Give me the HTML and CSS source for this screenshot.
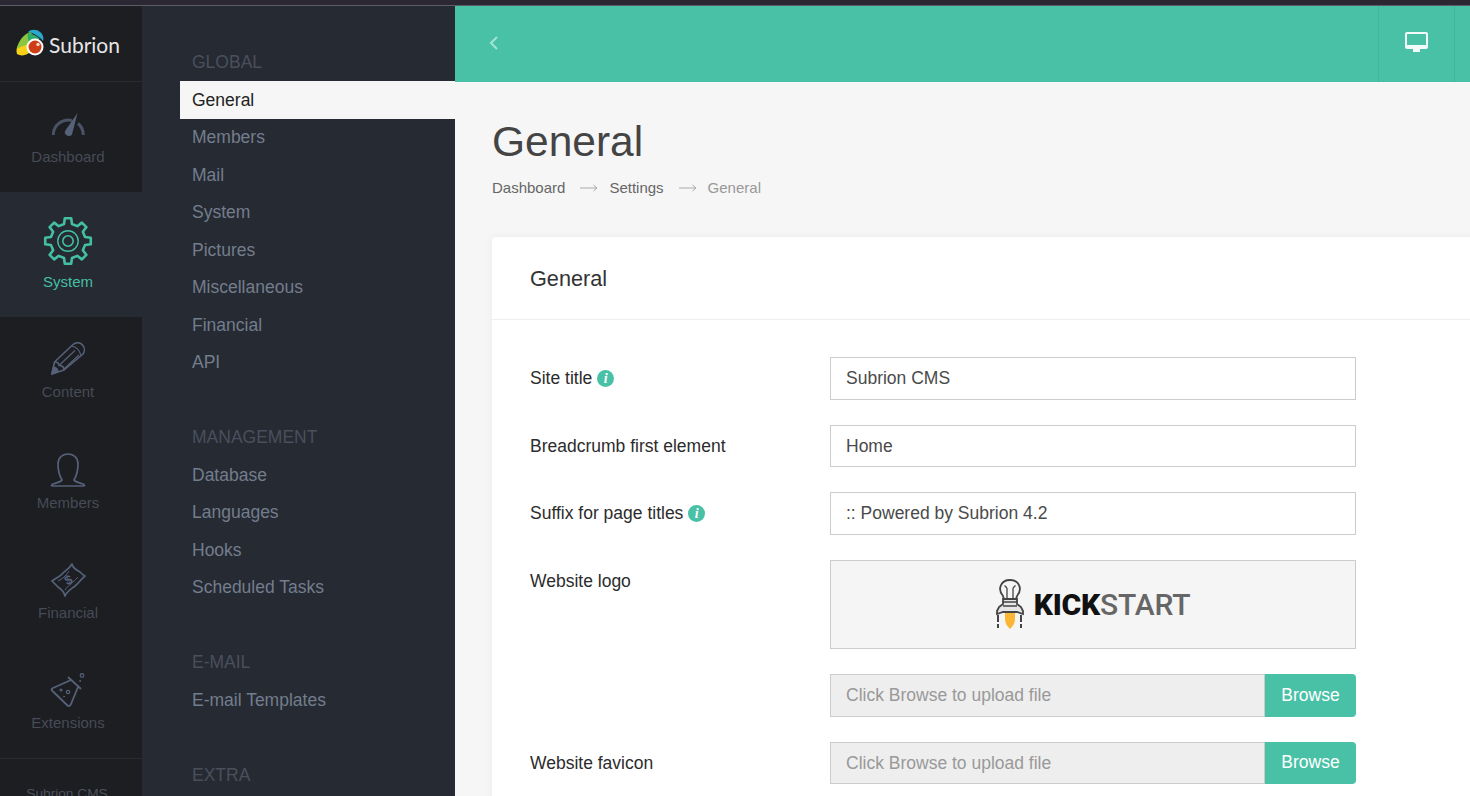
FILE: index.html
```html
<!DOCTYPE html>
<html lang="en">
<head>
  <meta charset="UTF-8" />
  <title>General :: Subrion</title>
  <link rel="stylesheet" href="styles.css">
</head>
<body>
  <div class="topstrip"></div>
  <div class="app">
    <nav class="rail">
      <div class="brand">
        <svg class="brand-mark" viewBox="0 0 30 28" width="30" height="28">
          <path d="M1 25C-1 19 3 12 10 11c3 3 4 8 3 13-4 3-9 3-12 1z" fill="#f7d117"/>
          <path d="M1 20C2 12 8 5 14 3c4 3 4 8 1 12-3 1-6 1-8 2-3 1-5 2-6 3z" fill="#8cc63f"/>
          <path d="M12 3c3-3 9-3 12 0 3 2 4 6 3 9-3-4-9-8-15-9z" fill="#29a9c9"/>
          <path d="M12 4c5 1 9 3 12 6-4 0-8 2-10 5-2-3-3-7-2-11z" fill="#2fae6b"/>
          <circle cx="19" cy="18" r="8.500" fill="#fff"/>
          <circle cx="19" cy="18" r="6.500" fill="#cf3d17"/>
          <circle cx="22" cy="15.500" r="1.700" fill="#f5d7c8"/>
        </svg>
        <span class="brand-name">Subrion</span>
      </div>
      <a class="rail-item">
        <svg class="rail-icon" viewBox="0 0 36 34">
          <path d="M3.300 28A15 15 0 0 1 22 13.500" fill="none" stroke="#4a5366" stroke-width="3"/>
          <path d="M28 16.500A15 15 0 0 1 33.300 28" fill="none" stroke="#4a5366" stroke-width="3"/>
          <path d="M27.500 6L15 24a4 4 0 0 0 7 3.500z" fill="#56617a"/>
        </svg>
        <span>Dashboard</span>
      </a>
      <a class="rail-item active">
        <svg class="gear" viewBox="-25 -25 50 50">
          <polygon points="-3.94,-17.05 -3.2,-22.78 3.2,-22.78 3.94,-17.05 9.27,-14.84 13.85,-18.37 18.37,-13.85 14.84,-9.27 17.05,-3.94 22.78,-3.2 22.78,3.2 17.05,3.94 14.84,9.27 18.37,13.85 13.85,18.37 9.27,14.84 3.94,17.05 3.2,22.78 -3.2,22.78 -3.94,17.05 -9.27,14.84 -13.85,18.37 -18.37,13.85 -14.84,9.27 -17.05,3.94 -22.78,3.2 -22.78,-3.2 -17.05,-3.94 -14.84,-9.27 -18.37,-13.85 -13.85,-18.37 -9.27,-14.84" fill="none" stroke="#43bfa3" stroke-width="2.6" stroke-linejoin="round"/>
          <circle r="10.2" fill="none" stroke="#43bfa3" stroke-width="1.4"/>
          <circle r="5.2" fill="none" stroke="#43bfa3" stroke-width="1.6"/>
        </svg>
        <span>System</span>
      </a>
      <a class="rail-item tall">
        <svg class="rail-icon" viewBox="0 0 36 34" fill="none" stroke="#56617a" stroke-width="1.600" stroke-linejoin="round">
          <path d="M2 32L4.500 20 23 2.500C26 0 30 0 32.500 3c2.500 3 2.500 7 0 9.500L14 28z"/>
          <path d="M4.500 20c3 0 4.500 1 4.500 3.500 3 0 5 1.500 5 4.500"/>
          <path d="M2 32l1.500-7c2 .5 4 2 4.500 4.500z" fill="#56617a"/>
          <path d="M21.500 4c4 .5 8 4 9.500 9.500M9 23.500L25 8.500M14 27L29 13" stroke-width="1.200"/>
        </svg>
        <span>Content</span>
      </a>
      <a class="rail-item">
        <svg class="rail-icon" viewBox="0 0 36 34" fill="none" stroke="#56617a" stroke-width="1.700" stroke-linejoin="round">
          <path d="M12 27C9 22 8 16 8 11 8 5 12 1 18 1s10 4 10 10c0 5-1 11-4 16 1 2 6 3 9 4 2 1 2 2 0 2H3c-2 0-2-1 0-2 3-1 8-2 9-4z"/>
        </svg>
        <span>Members</span>
      </a>
      <a class="rail-item">
        <svg class="rail-icon" viewBox="0 0 36 34" fill="none" stroke="#56617a" stroke-width="1.700" stroke-linejoin="round">
          <path d="M2 18C6 15 10 14 13 10 16 7 19 6 22 1c1 5 5 6 8 8 2 2 3 3 5 4-4 3-6 7-10 10-4 3-8 5-10 10-1-5-4-7-7-9-2-2-4-4-6-6z"/>
          <path d="M8 18c4-2 8-5 11-10M15 27c2-4 8-7 13-13" stroke-width="1"/>
          <text class="bill-sign" x="18.500" y="21.500" transform="rotate(-25 18 17)">$</text>
        </svg>
        <span>Financial</span>
      </a>
      <a class="rail-item">
        <svg class="rail-icon" viewBox="0 0 36 34" fill="none" stroke="#56617a" stroke-width="1.800" stroke-linejoin="round" stroke-linecap="round">
          <path d="M21 7L3 15c-2 1-2 2 0 3.500L17 32c2 2 3 1 4-1l7-17"/>
          <path d="M18.500 4.500l12 11"/>
          <circle cx="32" cy="2.500" r="1.800" stroke-width="1.200"/>
          <circle cx="30" cy="8" r=".5" stroke-width="1"/>
          <circle cx="11" cy="17" r="1" stroke-width="1.200"/>
          <circle cx="18" cy="19" r="1.700" stroke-width="1.200"/>
          <circle cx="14" cy="23.500" r=".5" stroke-width="1"/>
        </svg>
        <span>Extensions</span>
      </a>
      <div class="rail-foot">Subrion CMS</div>
    </nav>

    <aside class="menu">
      <div class="menu-group">
        <h4>GLOBAL</h4>
        <a class="active">General</a>
        <a>Members</a>
        <a>Mail</a>
        <a>System</a>
        <a>Pictures</a>
        <a>Miscellaneous</a>
        <a>Financial</a>
        <a>API</a>
      </div>
      <div class="menu-group">
        <h4>MANAGEMENT</h4>
        <a>Database</a>
        <a>Languages</a>
        <a>Hooks</a>
        <a>Scheduled Tasks</a>
      </div>
      <div class="menu-group">
        <h4>E-MAIL</h4>
        <a>E-mail Templates</a>
      </div>
      <div class="menu-group">
        <h4>EXTRA</h4>
      </div>
    </aside>

    <main class="main">
      <header class="topbar">
        <svg class="back" viewBox="0 0 10 16" width="10" height="16">
          <path d="M8 2L2 8l6 6" fill="none" stroke="#a5e3d5" stroke-width="2"/>
        </svg>
        <div class="topbar-btn">
          <svg viewBox="0 0 23 20" width="23" height="20">
            <path d="M2 0h19a2 2 0 0 1 2 2v13a2 2 0 0 1-2 2h-6v3H8v-3H2a2 2 0 0 1-2-2V2a2 2 0 0 1 2-2zm0 2v11h19V2z" fill="#f2fbf9"/>
          </svg>
        </div>
      </header>

      <section class="page-head">
        <h1>General</h1>
        <div class="crumbs">
          <a>Dashboard</a>
          <svg class="sep" viewBox="0 0 18 8" width="18" height="8"><path d="M0 4h17M13.500 1L17 4l-3.500 3" fill="none" stroke="#aaa"/></svg>
          <a>Settings</a>
          <svg class="sep" viewBox="0 0 18 8" width="18" height="8"><path d="M0 4h17M13.500 1L17 4l-3.500 3" fill="none" stroke="#aaa"/></svg>
          <span class="current">General</span>
        </div>
      </section>

      <section class="card">
        <div class="card-title">General</div>
        <form class="card-body">
          <div class="field">
            <label>Site title <i class="info">i</i></label>
            <input type="text" value="Subrion CMS">
          </div>
          <div class="field">
            <label>Breadcrumb first element</label>
            <input type="text" value="Home">
          </div>
          <div class="field">
            <label>Suffix for page titles <i class="info">i</i></label>
            <input type="text" value=":: Powered by Subrion 4.2">
          </div>
          <div class="field">
            <label>Website logo</label>
            <div class="logo-box">
              <svg viewBox="0 0 28 50" width="28" height="50" fill="none" stroke="#444" stroke-width="1.800">
                <path d="M9 30h10v10c0 4-2 7-5 10-3-3-5-6-5-10z" fill="#fbb733" stroke="none"/>
                <path d="M7 17C1 10 5 1 14 1s13 9 7 16l-1 3H8z"/>
                <path d="M11 19V9M17 19V9M8.500 6.500L11 9M19.500 6.500L17 9" stroke-width="1.300"/>
                <path d="M7 20h14v5l4 3 2 4v3l-6-2H7l-6 2v-3l2-4 4-3z" fill="#e6e6e6"/>
                <path d="M7 23h14M7 27h14" stroke-width="1.500"/>
                <path d="M2 36v7M25 36v7M2 45v4M25 45v4" stroke-width="2"/>
              </svg>
              <span class="kick">KICK<span>START</span></span>
            </div>
          </div>
          <div class="field">
            <label></label>
            <div class="upload">
              <input type="text" placeholder="Click Browse to upload file" disabled>
              <button type="button">Browse</button>
            </div>
          </div>
          <div class="field">
            <label>Website favicon</label>
            <div class="upload">
              <input type="text" placeholder="Click Browse to upload file" disabled>
              <button type="button">Browse</button>
            </div>
          </div>
        </form>
      </section>
    </main>
  </div>
</body>
</html>
```

FILE: styles.css
```css
* {
  box-sizing: border-box;
}
html, body {
  margin: 0;
  height: 796px;
  overflow: hidden;
}
body {
  font-family: "Liberation Sans", Arial, sans-serif;
  background: #f6f6f6;
  color: #333;
}
.topstrip {
  height: 6px;
  background: #2b2833;
  border-bottom: 1px solid #5c5e66;
}
.app {
  display: flex;
  height: 790px;
}

/* left icon rail */
.rail {
  width: 142px;
  flex: none;
  background: #1c1e22;
  color: #474b56;
  font-size: 15px;
  line-height: 20px;
}
.brand {
  height: 76px;
  display: flex;
  align-items: center;
  gap: 3px;
  padding: 2px 0 0 16px;
  border-bottom: 1px solid #2a2c31;
}
.brand-mark {
  margin-bottom: 3px;
}
.brand-name {
  font-family: Lato, sans-serif;
  font-size: 21px;
  color: #e6e6e6;
}
.rail-item {
  display: flex;
  flex-direction: column;
  align-items: center;
  height: 110px;
  width: 136px;
  padding-top: 25px;
}
.rail-item.tall {
  height: 111px;
}
.rail-icon {
  width: 36px;
  height: 34px;
  margin-bottom: 6px;
}
.bill-sign {
  font: bold 13px "Liberation Sans", sans-serif;
  fill: #56617a;
  stroke: none;
  text-anchor: middle;
}
.rail-item.active {
  width: 142px;
  padding-right: 6px;
  height: 125px;
  background: #262a33;
  color: #43bfa3;
}
.gear {
  width: 50px;
  height: 50px;
  margin: -1px 0 6px;
}
.rail-foot {
  height: 60px;
  padding: 25px 8px 0 0;
  font-size: 13.7px;
  text-align: center;
  border-top: 1px solid #2a2c31;
  color: #4c515c;
}

/* second level menu */
.menu {
  width: 313px;
  flex: none;
  background: #262a33;
  padding: 37.25px 0 0 38px;
  font-size: 17.5px;
  line-height: 38px;
}
.menu-group {
  margin-bottom: 37.5px;
}
.menu h4 {
  margin: 0;
  height: 37.5px;
  padding-left: 12px;
  font-size: 17.5px;
  font-weight: normal;
  color: #4a4f5b;
}
.menu a {
  display: block;
  height: 37.5px;
  padding-left: 12px;
  color: #737d8c;
}
.menu a.active {
  height: 38px;
  margin-bottom: -0.5px;
  background: #f6f6f6;
  color: #222;
}

/* main column */
.main {
  flex: 1;
  min-width: 0;
  overflow: hidden;
}
.topbar {
  height: 76px;
  background: #49c1a7;
  display: flex;
  align-items: center;
  justify-content: space-between;
  padding: 0 15px 0 34px;
}
.back {
  margin-bottom: 3px;
}
.topbar-btn {
  width: 77px;
  height: 100%;
  display: flex;
  align-items: center;
  justify-content: center;
  padding-bottom: 4px;
  border-left: 1px solid #43b69d;
  border-right: 1px solid #43b69d;
}
.page-head {
  padding: 35px 37px 0;
  height: 155px;
}
.page-head h1 {
  margin: 0;
  font-size: 42.5px;
  line-height: 50px;
  font-weight: normal;
  color: #444;
}
.crumbs {
  margin-top: 11px;
  font-size: 15px;
  line-height: 20px;
  color: #666;
  display: flex;
  align-items: center;
}
.crumbs .sep {
  margin: 0 11px 0 15px;
}
.crumbs .current {
  color: #999;
}

.card {
  margin-left: 37px;
  width: 1100px;
  height: 700px;
  background: #fff;
  border-radius: 4px;
  box-shadow: 0 0 8px rgba(0,0,0,0.05);
}
.card-title {
  height: 83px;
  padding-left: 38px;
  font-size: 21.7px;
  line-height: 83px;
  color: #333;
  border-bottom: 1px solid #eee;
}
.card-body {
  padding: 37px 0 0 38px;
  width: 864px;
}
.field {
  display: flex;
  margin-bottom: 25px;
}
.field label {
  width: 300px;
  flex: none;
  font-size: 17.5px;
  line-height: 42.5px;
  color: #2c2c2c;
}
.info {
  display: inline-block;
  width: 17px;
  height: 17px;
  border-radius: 50%;
  background: #49c1a7;
  color: #fff;
  font: italic bold 14px/17px "Liberation Serif", serif;
  text-align: center;
  vertical-align: 1px;
}
.field input {
  flex: 1;
  min-width: 0;
  height: 42.5px;
  padding: 0.5px 15px 0;
  font: 17.5px "Liberation Sans", Arial, sans-serif;
  color: #4a4a4a;
  background: #fff;
  border: 1px solid #ccc;
  border-radius: 0;
}
.field input:disabled {
  background: #eee;
}
.field input::placeholder {
  color: #999;
  opacity: 1;
}
.logo-box {
  flex: 1;
  height: 89.5px;
  display: flex;
  align-items: center;
  justify-content: center;
  gap: 10px;
  background: #f5f5f5;
  border: 1px solid #ccc;
}
.kick {
  font-family: Roboto, sans-serif;
  font-weight: 900;
  font-size: 30px;
  letter-spacing: -0.2px;
  color: #111;
}
.kick span {
  font-weight: 500;
  color: #666;
}
.upload {
  flex: 1;
  display: flex;
  height: 42.5px;
}
.upload button {
  width: 91px;
  flex: none;
  border: 0;
  border-radius: 0 4px 4px 0;
  background: #49c1a7;
  color: #fff;
  font: 17.5px "Liberation Sans", Arial, sans-serif;
}
```
